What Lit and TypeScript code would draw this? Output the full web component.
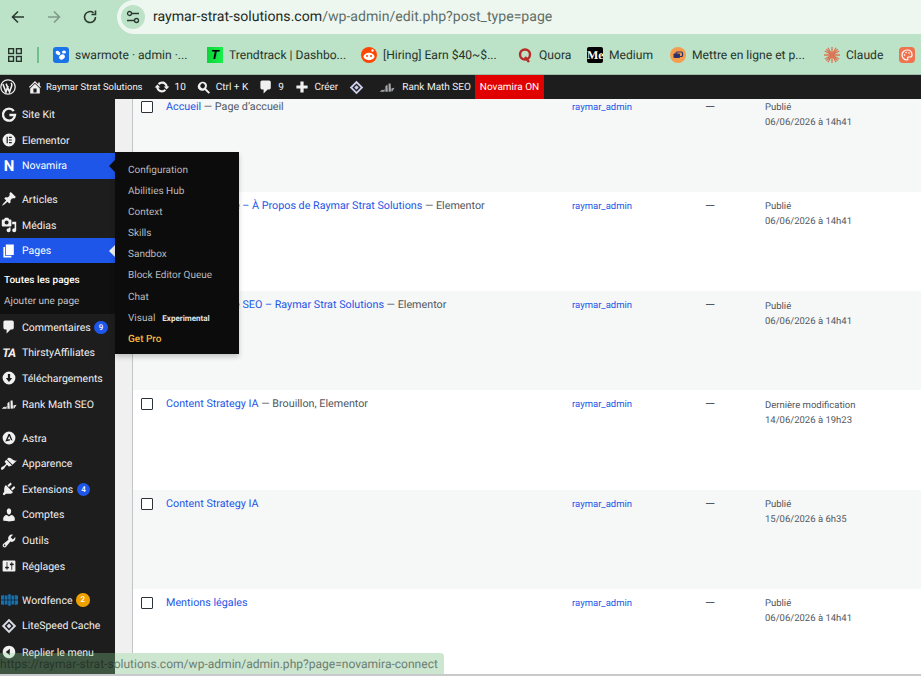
import { LitElement, css, html, svg } from "lit";
import { customElement } from "lit/decorators.js";

const ICONS: Record<string, string> = {
  post: "M10.44 3.02l1.82-1.82 6.36 6.35-1.83 1.82c-1.05-.68-2.48-.57-3.41.36l-.75.75c-.92.93-1.04 2.35-.35 3.41l-1.83 1.82-2.41-2.41-2.8 2.79c-.42.42-3.38 2.71-3.8 2.29s1.86-3.39 2.28-3.81l2.79-2.79L4.1 9.36l1.83-1.82c1.05.69 2.48.57 3.4-.36l.75-.75c.93-.92 1.05-2.35.36-3.41z",
  media: "M13 11V4c0-.55-.45-1-1-1h-1.67L9 1H5L3.67 3H2c-.55 0-1 .45-1 1v7c0 .55.45 1 1 1h10c.55 0 1-.45 1-1zM7 4.5c1.38 0 2.5 1.12 2.5 2.5S8.38 9.5 7 9.5 4.5 8.38 4.5 7 5.62 4.5 7 4.5zM14 6h5v10.5c0 1.38-1.12 2.5-2.5 2.5S14 17.88 14 16.5s1.12-2.5 2.5-2.5c.17 0 .34.02.5.05V9h-3V6zm-4 8.05V13h2v3.5c0 1.38-1.12 2.5-2.5 2.5S7 17.88 7 16.5 8.12 14 9.5 14c.17 0 .34.02.5.05z",
  page: "M6 15V2h10v13H6zm-1 1h8v2H3V5h2v11z",
  comment: "M5 2h9c1.1 0 2 .9 2 2v7c0 1.1-.9 2-2 2h-2l-5 5v-5H5c-1.1 0-2-.9-2-2V4c0-1.1.9-2 2-2z",
  brush: "M14.48 11.06L7.41 3.99l1.5-1.5c.5-.56 2.3-.47 3.51.32 1.21.8 1.43 1.28 2.91 2.1 1.18.64 2.45 1.26 4.45.85zm-.71.71L6.7 4.7 4.93 6.47c-.39.39-.39 1.02 0 1.41l1.06 1.06c.39.39.39 1.03 0 1.42-.6.6-1.43 1.11-2.21 1.69-.35.26-.7.53-1.01.84C1.43 13.23.5 14.01 0 15.13c-.27.6-.1 1.27.35 1.71.39.39 1 .5 1.5.3.98-.44 1.72-1.3 2.5-2.26.26-.3.53-.65.83-1 .58-.78 1.09-1.61 1.69-2.21.39-.39 1.03-.39 1.42 0l1.06 1.06c.39.39 1.02.39 1.41 0z",
  plugin: "M13.11 4.36L9.87 7.6 8 5.73l3.24-3.24c.35-.34 1.05-.2 1.56.32.52.51.66 1.21.31 1.55zm-8 1.77l.91-1.12 9.01 9.01-1.19.84c-.71.71-2.63 1.16-3.82 1.16H6.14L4.9 17.26c-.59.59-1.54.59-2.12 0-.59-.58-.59-1.53 0-2.12l1.24-1.24v-3.88c0-1.13.4-3.19 1.09-3.89zm7.26 3.97l3.24-3.24c.34-.35 1.04-.21 1.55.31.52.51.66 1.21.31 1.55l-3.24 3.25z",
  users: "M10 9.25c-2.27 0-2.73-3.44-2.73-3.44C7 4.02 7.82 2 9.97 2c2.16 0 2.98 2.02 2.71 3.81 0 0-.41 3.44-2.68 3.44zm0 2.57L12.72 10c2.39 0 4.52 2.33 4.52 4.53v2.49s-3.65 1.13-7.24 1.13c-3.65 0-7.24-1.13-7.24-1.13v-2.49c0-2.25 1.94-4.53 4.47-4.53z",
  tools: "M16.68 9.77c-1.34 1.34-3.3 1.67-4.95.99l-5.41 6.52c-.99.99-2.59.99-3.58 0s-.99-2.59 0-3.57l6.52-5.42c-.68-1.65-.35-3.61.99-4.95 1.28-1.28 3.12-1.62 4.72-1.06l-2.89 2.89 2.82 2.82 2.86-2.87c.53 1.58.18 3.39-1.08 4.65zM3.81 16.21c.4.39 1.04.39 1.43 0 .4-.4.4-1.04 0-1.43-.39-.4-1.03-.4-1.43 0-.39.39-.39 1.03 0 1.43z",
  settings: "M18 16V4c0-.55-.45-1-1-1H3c-.55 0-1 .45-1 1v12c0 .55.45 1 1 1h14c.55 0 1-.45 1-1zM8 11h1c.55 0 1 .45 1 1s-.45 1-1 1H8v1.5c0 .28-.22.5-.5.5s-.5-.22-.5-.5V13H6c-.55 0-1-.45-1-1s.45-1 1-1h1V5.5c0-.28.22-.5.5-.5s.5.22.5.5V11zm5-2h-1c-.55 0-1-.45-1-1s.45-1 1-1h1V5.5c0-.28.22-.5.5-.5s.5.22.5.5V7h1c.55 0 1 .45 1 1s-.45 1-1 1h-1v5.5c0 .28-.22.5-.5.5s-.5-.22-.5-.5V9z",
  collapse: "M10 2.16c4.33 0 7.84 3.51 7.84 7.84s-3.51 7.84-7.84 7.84S2.16 14.33 2.16 10 5.67 2.16 10 2.16zM11 14V6l-5 4z",
  download: "M10 2a8 8 0 1 0 0 16 8 8 0 0 0 0-16zM8.6 5h2.8v5h2.6L10 15l-4-5h2.6z",
  elementor: "M10 2a8 8 0 1 0 0 16 8 8 0 0 0 0-16zM7 6h1.5v8H7zm3 0h3.5v1.5H10zm0 3.25h3.5v1.5H10zm0 3.25h3.5V14H10z",
  astra: "M10 2a8 8 0 1 0 0 16 8 8 0 0 0 0-16zM9.4 5h1.7l3.4 8.5-2.2-1.3-2-4.6-2.1 4.4 2.4-.6.8 1.7-6 1.2z",
  home: "M16 8.5l1.53 1.53-1.06 1.06L10 4.62l-6.47 6.47-1.06-1.06L10 2.5l4 4v-2h2v4zm-6-2.46l6 5.99V18H4v-5.97zM12 17v-5H8v5h4z",
  update: "M10.2 3.28c3.53 0 6.43 2.61 6.92 6h2.08l-3.5 4-3.5-4h2.32c-.45-1.97-2.21-3.44-4.32-3.44-1.45 0-2.73.71-3.54 1.79L4.95 5.66C6.23 4.2 8.11 3.28 10.2 3.28zm-.4 13.44c-3.52 0-6.43-2.61-6.92-6H.8l3.5-4c1.17 1.33 2.33 2.67 3.5 4H5.48c.45 1.97 2.21 3.44 4.32 3.44 1.45 0 2.73-.71 3.54-1.79l1.71 1.95c-1.28 1.46-3.15 2.4-5.25 2.4z",
  search: "M12.14 4.78c1.95 1.95 2.1 5 .46 7.12l4.9 4.9-1.7 1.7-4.9-4.9c-2.12 1.64-5.17 1.49-7.12-.46-2.12-2.12-2.12-5.55 0-7.67s6.24-2.81 8.36-.69zm-1.7 1.7a3.02 3.02 0 0 0-4.27 4.27 3.02 3.02 0 0 0 4.27-4.27z",
  plus: "M8 3h4v5h5v4h-5v5H8v-5H3V8h5z",
  bars: "M1 16l3-3 1 1.5 2-2v3.5H1zM8 9l2.5-2 .5 9H8zM12 5.5h2.5l.5 10-3 .5zM15.5 12l4-1-3 4.5h-1z",
};

const icon = (name: string, size = 16) => html`<svg class="ico" width=${size} height=${size} viewBox="0 0 20 20">${svg`<path fill="currentColor" fill-rule="evenodd" d=${ICONS[name]} />`}</svg>`;

const wpLogo = html`<svg width="16" height="16" viewBox="0 0 20 20" fill="none" stroke="currentColor">
  <circle cx="10" cy="10" r="9" stroke-width="1.6" />
  <path d="M3.6 6.2l3.8 10.2 2.7-7.8M7.6 5.8l4.3 10.6 2.7-7.6c.7-2-.3-3.4-.7-4" stroke-width="2" />
</svg>`;

const diamond = (size: number, edge = "#d9dde6") => html`<svg width=${size} height=${size} viewBox="0 0 20 20">
  <path fill=${edge} d="M10 1l9 9-9 9-9-9z" />
  <path fill="#1d1d1d" d="M10 4.5l5.5 5.5-5.5 5.5L4.5 10z" />
  <path fill=${edge} d="M10 7l3 3-3 3-3-3z" />
</svg>`;

type MenuItem = { label: string; icon: unknown; badge?: string; badgeColor?: string; active?: boolean; arrow?: "dark" | "light"; spacing?: "gap" | "wide" | "last" };

const textIcon = (t: string, cls: string) => html`<span class=${cls}>${t}</span>`;
const siteKit = html`<svg width="16" height="16" viewBox="0 0 20 20" fill="none" stroke="currentColor" stroke-width="3"><path d="M16 5a7.5 7.5 0 1 0 1.5 5h-7" /></svg>`;
const wordfence = html`<svg width="17" height="14" viewBox="0 0 20 16"><path fill="#1f6fa8" d="M0 3l3-1 3 1 4-2 4 2 3-1 3 1v10l-3 1-3-1-4 2-4-2-3 1-3-1z" /><path stroke="#0b2c44" stroke-width="1" d="M4 2v12M8 2v12M12 2v12M16 2v12M0 8h20" /></svg>`;

const menu: MenuItem[] = [
  { label: "Site Kit", icon: siteKit },
  { label: "Elementor", icon: icon("elementor") },
  { label: "Novamira", icon: textIcon("N", "n-icon"), active: true, arrow: "dark" },
  { label: "Articles", icon: icon("post"), spacing: "gap" },
  { label: "Médias", icon: icon("media") },
  { label: "Pages", icon: icon("page"), active: true, arrow: "light" },
];
const menu2: MenuItem[] = [
  { label: "Commentaires", icon: icon("comment"), badge: "9", badgeColor: "#1d56e8" },
  { label: "ThirstyAffiliates", icon: textIcon("TA", "ta-icon") },
  { label: "Téléchargements", icon: icon("download") },
  { label: "Rank Math SEO", icon: icon("bars") },
  { label: "Astra", icon: icon("astra"), spacing: "wide" },
  { label: "Apparence", icon: icon("brush") },
  { label: "Extensions", icon: icon("plugin"), badge: "4", badgeColor: "#1d56e8" },
  { label: "Comptes", icon: icon("users") },
  { label: "Outils", icon: icon("tools") },
  { label: "Réglages", icon: icon("settings") },
  { label: "Wordfence", icon: wordfence, spacing: "wide", badge: "2", badgeColor: "#f0a100" },
  { label: "LiteSpeed Cache", icon: diamond(16) },
  { label: "Replier le menu", icon: icon("collapse"), spacing: "last" },
];

const flyout = ["Configuration", "Abilities Hub", "Context", "Skills", "Sandbox", "Block Editor Queue", "Chat"];

const rows = [
  { title: "Accueil", state: " — Page d’accueil", status: "Publié", date: "06/06/2026 à 14h41" },
  { title: "Notre Expertise – À Propos de Raymar Strat Solutions", state: " — Elementor", status: "Publié", date: "06/06/2026 à 14h41" },
  { title: "Notre Présence SEO – Raymar Strat Solutions", state: " — Elementor", status: "Publié", date: "06/06/2026 à 14h41" },
  { title: "Content Strategy IA", state: " — Brouillon, Elementor", status: "Dernière modification", date: "14/06/2026 à 19h23" },
  { title: "Content Strategy IA", state: "", status: "Publié", date: "15/06/2026 à 6h35" },
  { title: "Mentions légales", state: "", status: "Publié", date: "06/06/2026 à 14h41" },
];

const bookmarks = [
  { w: 154, label: "swarmote · admin ·...", fav: html`<span class="fav swarm"><svg width="16" height="16" viewBox="0 0 16 16" fill="#fff"><ellipse cx="5" cy="6" rx="2.6" ry="1.8" transform="rotate(35 5 6)"/><ellipse cx="11" cy="5" rx="2" ry="1.5"/><ellipse cx="9" cy="10" rx="3" ry="2.4" transform="rotate(-35 9 10)"/></svg></span>` },
  { w: 154, label: "Trendtrack | Dashbo...", fav: html`<span class="fav trend">T</span>` },
  { w: 156, label: "[Hiring] Earn $40~$...", fav: html`<span class="fav"><svg width="16" height="16" viewBox="0 0 16 16"><circle cx="8" cy="8" r="8" fill="#ff4500"/><ellipse cx="8" cy="9.5" rx="5.5" ry="3.7" fill="#fff"/><circle cx="6" cy="9" r="1" fill="#ff4500"/><circle cx="10" cy="9" r="1" fill="#ff4500"/><circle cx="11.5" cy="3.5" r="1.2" fill="#fff"/></svg></span>` },
  { w: 70, label: "Quora", fav: html`<span class="fav"><svg width="16" height="16" viewBox="0 0 16 16" fill="none" stroke="#b92b27" stroke-width="2.4"><circle cx="8" cy="7.5" r="5"/><path d="M8 10l4 5"/></svg></span>` },
  { w: 83, label: "Medium", fav: html`<span class="fav medium">Me</span>` },
  { w: 154, label: "Mettre en ligne et p...", fav: html`<span class="fav"><svg width="16" height="16" viewBox="0 0 16 16"><circle cx="8" cy="8" r="8" fill="#f59d4d"/><rect x="3.5" y="6.5" width="6.5" height="4.5" rx="1" fill="#2c3168"/><rect x="6" y="5" width="6.5" height="4.5" rx="1" fill="none" stroke="#2c3168" stroke-width="1.2"/></svg></span>` },
  { w: 75, label: "Claude", fav: html`<span class="fav"><svg width="16" height="16" viewBox="0 0 16 16" stroke="#d97757" stroke-width="1.3"><path d="M8 0v16M0 8h16M2.3 2.3l11.4 11.4M13.7 2.3L2.3 13.7M4 .8l8 14.4M12 .8L4 15.2M.8 4l14.4 8M15.2 4L.8 12"/></svg></span>` },
  { w: 22, label: "", fav: html`<span class="fav"><svg width="16" height="16" viewBox="0 0 16 16"><rect width="16" height="16" rx="4" fill="#f0734f"/><path d="M8 3a5 5 0 1 0 0 10c1.2 0 1-1 .7-1.6-.3-.8.2-1.4 1-1.4h1.5c1 0 1.8-.8 1.8-2C13 5 11 3 8 3z" fill="none" stroke="#fff" stroke-width="1.2"/><circle cx="5.5" cy="8" r=".8" fill="#fff"/><circle cx="7" cy="5.5" r=".8" fill="#fff"/><circle cx="10" cy="6" r=".8" fill="#fff"/></svg></span>` },
];

@customElement("app-root")
export class AppRoot extends LitElement {
  static styles = css`
    :host {
      display: block;
      position: relative;
      width: 921px;
      height: 676px;
      overflow: hidden;
      font-family: Roboto, "Noto Sans", sans-serif;
      text-rendering: geometricPrecision;
      background: #c8c9ca;
    }
    svg { display: block; flex: none; }

    .toolbar {
      height: 34px;
      background: #bce2c8;
      display: flex;
      align-items: center;
      padding-left: 10px;
      color: #2b3a31;
    }
    .nav { width: 36px; display: flex; }
    .forward { color: #7f9a88; }
    .reload { margin-right: -1px; }
    .omni {
      flex: 1;
      height: 34px;
      background: #edf7f0;
      border-radius: 17px 0 0 17px;
      display: flex;
      align-items: center;
      padding-left: 4px;
      gap: 8px;
      font-size: 14.1px;
      color: #5f6e66;
      white-space: nowrap;
    }
    .chip {
      width: 24px;
      height: 24px;
      border-radius: 50%;
      background: #bce2c8;
      display: flex;
      align-items: center;
      justify-content: center;
    }
    .omni b { font-weight: 400; color: #1f2a24; }

    .bookmarks {
      height: 41px;
      box-sizing: border-box;
      padding: 1px 0 0 8px;
      background: #bce2c8;
      border-bottom: 1px solid #9cbca8;
      display: flex;
      align-items: center;
      font-size: 12.1px;
      color: #26332b;
      white-space: nowrap;
    }
    .divider { width: 2px; height: 16px; background: #71bf8c; margin: 0 14px 0 15px; }
    .bm { display: flex; align-items: center; gap: 6px; flex: none; }
    .fav { width: 16px; height: 16px; display: block; flex: none; overflow: hidden; }
    .swarm { background: #1a73e8; border-radius: 3px; }
    .trend {
      background: linear-gradient(90deg, #0bd43a, #18f04c);
      color: #000;
      font: italic 700 13px/16px "Liberation Sans", sans-serif;
      text-align: center;
    }
    .medium {
      background: #000;
      color: #fff;
      border-radius: 2px;
      font: 700 12px/16px "Liberation Serif", serif;
      white-space: nowrap;
    }

    .adminbar {
      height: 24px;
      background: #1d1d1d;
      color: #f0f0f1;
      display: flex;
      align-items: center;
      font-size: 10px;
      white-space: nowrap;
      position: relative;
      z-index: 3;
    }
    .ab { display: flex; align-items: center; height: 24px; }
    .wp { margin-right: 11px; }
    .site { gap: 3px; margin-right: 11px; font-size: 9.5px; }
    .updates { gap: 5px; margin-right: 10px; }
    .search { gap: 4px; margin-right: 10px; }
    .comments { gap: 4px; margin-right: 10.5px; }
    .create { gap: 4px; margin-right: 11px; }
    .dia { margin-right: 15px; }
    .rank { gap: 7px; margin-right: 4px; }
    .rank svg { color: #a7aaad; }
    .nova { background: #e00000; padding: 0 5px; height: 24px; color: #fff; }

    .body { display: flex; height: 575px; overflow: hidden; position: relative; background: #f0f0f1; }
    .side {
      width: 115px;
      flex: none;
      background: #1d1d1d;
      color: #f0f0f1;
      font-size: 10.5px;
      padding-top: 2.9px;
    }
    .item {
      height: 25.6px;
      display: flex;
      align-items: center;
      gap: 5px;
      padding-left: 1px;
      position: relative;
      white-space: nowrap;
    }
    .item.gap { margin-top: 8px; }
    .item.wide { margin-top: 8.5px; }
    .item.last { margin-top: 1px; }
    .item.active { background: #1d56e8; color: #fff; }
    .slot { width: 16px; display: flex; justify-content: center; flex: none; }
    .n-icon { font: 700 15px/16px Roboto, sans-serif; }
    .ta-icon { font: italic 700 12px/16px Roboto, sans-serif; letter-spacing: -0.5px; }
    .badge {
      width: 13.5px;
      height: 13.5px;
      margin-left: -1.5px;
      border-radius: 50%;
      color: #fff;
      font-size: 8px;
      line-height: 13.5px;
      text-align: center;
      font-weight: 500;
    }
    .arrow {
      position: absolute;
      right: 0;
      top: 50%;
      margin-top: -6px;
      border: 6px solid transparent;
      border-left-width: 0;
    }
    .arrow.dark { border-right-color: #0c0c0c; }
    .arrow.light { border-right-color: #f0f0f1; }
    .sub { background: #101010; padding: 7px 0 2px 4px; font-size: 10px; color: #c3c4c7; }
    .sub div { height: 21px; line-height: 21px; }
    .sub .cur { color: #fff; font-weight: 500; }

    .content { flex: 1; margin-left: 17px; border-left: 1px solid #c3c4c7; overflow: hidden; }
    .rows { margin-top: -6.4px; }
    .row { height: 99.25px; box-sizing: border-box; background: #fff; display: flex; font-size: 10.75px; color: #50575e; }
    .row.alt { background: #f6f7f7; }
    .check {
      width: 10px;
      height: 10px;
      border: 1px solid #2c3338;
      border-radius: 1px;
      background: #fff;
      margin: 8px 13px 0 8px;
      flex: none;
    }
    .title { width: 406px; flex: none; padding-top: 6px; white-space: nowrap; line-height: 15px; }
    .title a, .author { color: #1d56e8; }
    .author { width: 134px; flex: none; padding-top: 8px; font-size: 9.5px; line-height: 13px; }
    .dash { width: 59px; flex: none; padding-top: 7px; line-height: 15px; font-size: 13px; margin-left: -1px; margin-right: 1px; }
    .date { padding-top: 7.5px; font-size: 9.5px; line-height: 15px; }

    .flyout {
      position: absolute;
      left: 115px;
      top: 152px;
      width: 124px;
      height: 202px;
      box-sizing: border-box;
      padding-top: 8px;
      background: #0c0c0c;
      color: #b9babd;
      font-size: 10px;
      z-index: 4;
      box-shadow: 0 3px 5px rgba(0, 0, 0, 0.2);
    }
    .flyout div { height: 21.1px; line-height: 21.1px; padding-left: 13px; white-space: nowrap; }
    .flyout .exp { font-size: 8px; font-weight: 700; color: #e4e4e4; margin-left: 7px; }
    .flyout .pro { color: #f4b942; font-weight: 500; }

    .status {
      position: absolute;
      left: 0;
      bottom: 2px;
      height: 21px;
      width: 444px;
      box-sizing: border-box;
      background: rgba(140, 220, 150, 0.3);
      border-radius: 0 4px 0 0;
      z-index: 5;
      font-size: 12.05px;
      line-height: 22px;
      white-space: nowrap;
      overflow: hidden;
    }
    .status .solid {
      position: absolute;
      left: 115px;
      right: 0;
      top: 0;
      bottom: 0;
      background: #cce6d0;
    }
    .status span { position: relative; color: #6d7d72; }
    .status span.over { color: #26352a; }
  `;

  private renderItem(m: MenuItem) {
    return html`<div class="item ${m.active ? "active" : ""} ${m.spacing ?? ""}">
      <span class="slot">${m.icon}</span>
      <span class="lbl">${m.label}</span>
      ${m.badge ? html`<span class="badge" style="background:${m.badgeColor}">${m.badge}</span>` : ""}
      ${m.arrow ? html`<span class="arrow ${m.arrow}"></span>` : ""}
    </div>`;
  }

  render() {
    return html`
      <div class="toolbar">
        <span class="nav"><svg width="16" height="16" viewBox="0 0 16 16" fill="none" stroke="currentColor" stroke-width="1.6"><path d="M14 8H2.5M8 2.5L2.5 8 8 13.5" /></svg></span>
        <span class="nav forward"><svg width="16" height="16" viewBox="0 0 16 16" fill="none" stroke="currentColor" stroke-width="1.6"><path d="M2 8h11.5M8 2.5L13.5 8 8 13.5" /></svg></span>
        <span class="nav reload"><svg width="16" height="16" viewBox="0 0 16 16" fill="none" stroke="currentColor" stroke-width="1.6"><path d="M13.5 8A5.5 5.5 0 1 1 11.5 3.8" /><path d="M13.5 1.5v4h-4" /></svg></span>
        <div class="omni">
          <span class="chip"><svg width="16" height="16" viewBox="0 0 16 16" fill="none" stroke="#2b3a31" stroke-width="1.3"><circle cx="4.5" cy="4.5" r="2" /><path d="M7 4.5h7M2 11.5h7" /><circle cx="11.5" cy="11.5" r="2" /></svg></span>
          <span><b>raymar-strat-solutions.com</b>/wp-admin/edit.php?post_type=page</span>
        </div>
      </div>
      <div class="bookmarks">
        <svg width="14" height="14" viewBox="0 0 14 14" fill="none" stroke="#26332b" stroke-width="1.4"><rect x=".7" y=".7" width="4.8" height="4.8"/><rect x="8.5" y=".7" width="4.8" height="4.8"/><rect x=".7" y="8.5" width="4.8" height="4.8"/><rect x="8.5" y="8.5" width="4.8" height="4.8"/></svg>
        <span class="divider"></span>
        ${bookmarks.map((b) => html`<span class="bm" style="width:${b.w}px">${b.fav}${b.label}</span>`)}
      </div>
      <div class="adminbar">
        <span class="ab wp">${wpLogo}</span>
        <span class="ab site">${icon("home")}Raymar Strat Solutions</span>
        <span class="ab updates">${icon("update")}10</span>
        <span class="ab search">${icon("search")}Ctrl + K</span>
        <span class="ab comments">${icon("comment")}9</span>
        <span class="ab create">${icon("plus")}Créer</span>
        <span class="ab dia">${diamond(15, "#cfcff0")}</span>
        <span class="ab rank">${icon("bars")}Rank Math SEO</span>
        <span class="ab nova">Novamira ON</span>
      </div>
      <div class="body">
        <nav class="side">
          ${menu.map((m) => this.renderItem(m))}
          <div class="sub">
            <div class="cur">Toutes les pages</div>
            <div>Ajouter une page</div>
          </div>
          ${menu2.map((m) => this.renderItem(m))}
        </nav>
        <div class="content">
          <div class="rows">
            ${rows.map(
              (r, i) => html`<div class="row ${i % 2 === 0 ? "alt" : ""}">
                <span class="check"></span>
                <div class="title"><a>${r.title}</a>${r.state}</div>
                <div class="author">raymar_admin</div>
                <div class="dash">—</div>
                <div class="date">${r.status}<br />${r.date}</div>
              </div>`
            )}
          </div>
        </div>
      </div>
      <div class="flyout">
        ${flyout.map((f) => html`<div>${f}</div>`)}
        <div>Visual<span class="exp">Experimental</span></div>
        <div class="pro">Get Pro</div>
      </div>
      <div class="status"><div class="solid"></div><span class="over">https://raymar-strat-s</span><span>olutions.com/wp-admin/admin.php?page=novamira-connect</span></div>
    `;
  }
}
